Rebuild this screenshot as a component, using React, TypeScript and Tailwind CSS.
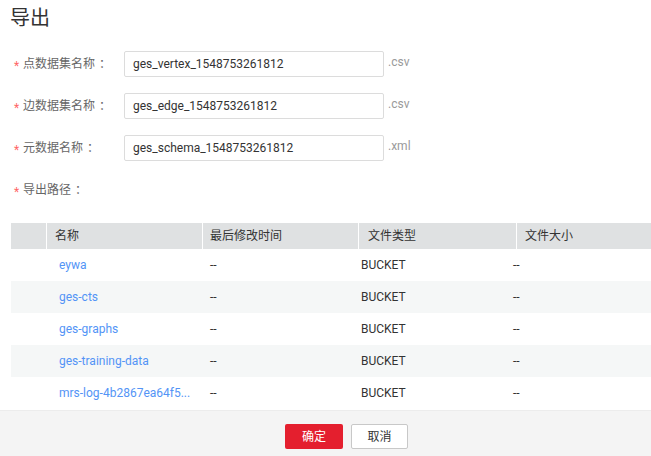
const FONT = { fontFamily: 'Roboto, "Noto Sans CJK SC", sans-serif' };

const fields = [
  { label: "点数据集名称", value: "ges_vertex_1548753261812", suffix: ".csv" },
  { label: "边数据集名称", value: "ges_edge_1548753261812", suffix: ".csv" },
  { label: "元数据名称", value: "ges_schema_1548753261812", suffix: ".xml" },
];

const rows = [
  "eywa",
  "ges-cts",
  "ges-graphs",
  "ges-training-data",
  "mrs-log-4b2867ea64f5...",
];

function Label({ text }: { text: string }) {
  return (
    <div className="w-[124px] shrink-0 pl-[14px] flex items-center text-[12px] text-[#666]">
      <span className="text-[#f66] w-[9px] text-[12px] leading-none pt-[3px]">*</span>
      <span>{text}</span>
      <span className="ml-[4px]">：</span>
    </div>
  );
}

export default function App() {
  return (
    <div className="w-[651px] h-[456px] bg-white flex flex-col overflow-hidden" style={FONT}>
      {/* Title */}
      <div className="pl-[10px] pt-[4px] h-[32px] text-[20px] leading-[28px] text-[#333]">导出</div>

      {/* Form */}
      <div className="flex flex-col gap-[16px] mt-[19px]">
        {fields.map((f) => (
          <div key={f.label} className="flex h-[26px]">
            <Label text={f.label} />
            <div className="w-[260px] h-[26px] border border-[#dcdcdc] rounded-[2px] px-[8px] flex items-center text-[12px] text-[#333]">
              {f.value}
            </div>
            <span className="ml-[4px] text-[12px] text-[#9a9a9a] leading-[22px]">{f.suffix}</span>
          </div>
        ))}
        <div className="flex h-[26px]">
          <Label text="导出路径" />
        </div>
      </div>

      {/* Table */}
      <div className="mt-[20px] ml-[11px] text-[12px] text-[#333]">
        <div className="grid grid-cols-[35px_156px_156px_158px_1fr] h-[26px] bg-[#dfe1e2]">
          <div />
          <div className="flex items-center pl-[8px] border-l border-white">名称</div>
          <div className="flex items-center pl-[7px] border-l border-white">最后修改时间</div>
          <div className="flex items-center pl-[9px] border-l border-white">文件类型</div>
          <div className="flex items-center pl-[8px] border-l border-white">文件大小</div>
        </div>
        {rows.map((name, i) => (
          <div
            key={name}
            className={`grid grid-cols-[48px_151px_151px_152px_1fr] h-[32px] items-center ${
              i % 2 === 1 ? "bg-[#f5f7f7]" : "bg-white"
            }`}
          >
            <div />
            <div className="text-[#5394f6] truncate">{name}</div>
            <div>--</div>
            <div>BUCKET</div>
            <div>--</div>
          </div>
        ))}
      </div>

      {/* Footer */}
      <div className="flex-1 mt-[1px] bg-[#f4f4f4] border-t border-[#ececec] pt-[13px] pl-[285px] flex gap-[8px] items-start">
        <button className="w-[58px] h-[25px] bg-[#e41f2e] text-white text-[12px] rounded-[2px]">确定</button>
        <button className="w-[57px] h-[25px] bg-white border border-[#c8c8c8] text-[#333] text-[12px] rounded-[2px]">
          取消
        </button>
      </div>
    </div>
  );
}
